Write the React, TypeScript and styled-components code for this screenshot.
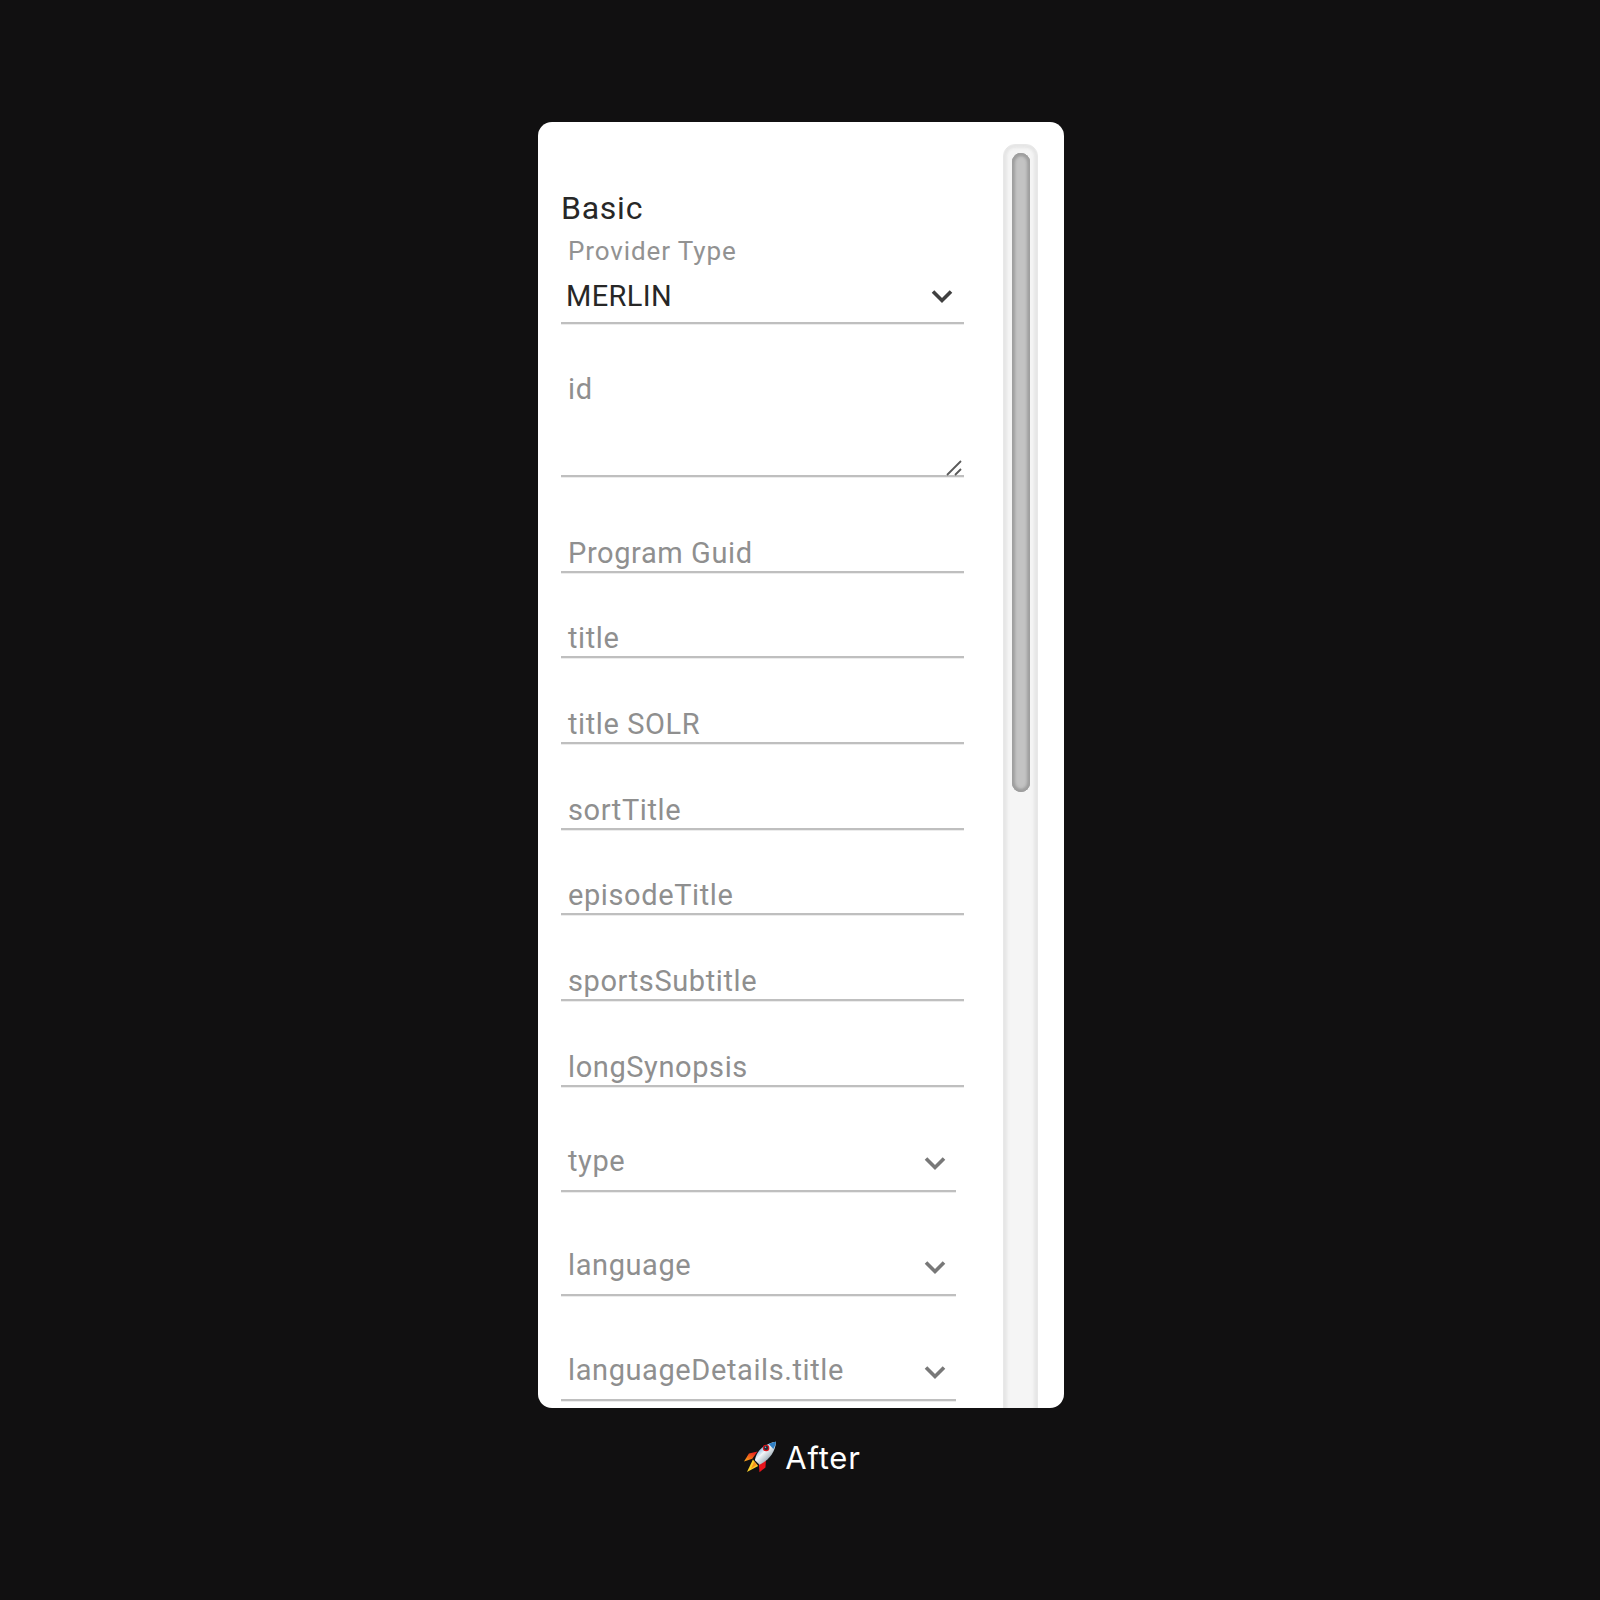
import React from "react";
import styled, { createGlobalStyle } from "styled-components";

const Global = createGlobalStyle`
  html, body { margin: 0; padding: 0; background: #111011; }
  body { font-family: Roboto, "Liberation Sans", sans-serif; }
`;
const Page = styled.div`
  width: 1600px; height: 1600px; background: #111011; display: flex; flex-direction: column; align-items: center; padding: 122px 0 0 2px; box-sizing: border-box;
`;
const Card = styled.div`
  width: 526px; height: 1286px; background: #fff; border-radius: 14px; overflow: hidden; display: flex; box-sizing: border-box; flex: none;
`;
const Form = styled.div`
  width: 403px; margin-left: 23px; flex: none; display: flex; flex-direction: column; padding-top: 68px;
`;
const Heading = styled.div`
  font-size: 32px; line-height: 36px; color: #272727; letter-spacing: 0.75px; margin-bottom: 10px;
`;
const SmallLabel = styled.div`
  font-size: 26px; line-height: 30px; color: #929292; padding-left: 7px; letter-spacing: 0.9px;
`;
const Field = styled.div<{ $h: number; $w?: number; $mt?: number; $align?: string }>`
  height: ${p => p.$h}px; width: ${p => p.$w ?? 403}px; margin-top: ${p => p.$mt ?? 0}px; border-bottom: 2px solid #bfbfbf; box-shadow: 0 1px 0 #ececec; box-sizing: border-box;
  display: flex; align-items: ${p => p.$align ?? "flex-end"}; justify-content: space-between; position: relative; flex: none;
`;
const Value = styled.span`
  font-size: 29px; line-height: 34px; color: #272727; padding-left: 5px; margin-bottom: 9px; letter-spacing: 0.35px;
`;
const Placeholder = styled.span<{ $mb?: number; $mt?: number }>`
  font-size: 29px; line-height: 34px; color: #8f8f8f; padding-left: 7px; margin-bottom: ${p => p.$mb ?? 1}px; margin-top: ${p => p.$mt ?? 0}px; letter-spacing: 0.6px;
`;
const Chevron = styled.svg<{ $dark?: boolean; $right: number; $bottom: number }>`
  width: 24px; height: 16px; margin-right: ${p => p.$right}px; margin-bottom: ${p => p.$bottom}px; fill: none; stroke: ${p => p.$dark ? "#404040" : "#787878"}; stroke-width: 3.6;
`;
const Grip = styled.svg`
  position: absolute; right: 0; bottom: -1px; width: 20px; height: 18px; stroke: #5a5a5a; stroke-width: 1.8; fill: none;
`;
const Track = styled.div`
  margin: 22px 0 0 39px; width: 35px; flex: none; height: 1300px; box-sizing: border-box; padding: 8px 8px 0;
  background: #f5f5f5; border-radius: 12px 12px 0 0; border: 1px solid #e8e8e8; box-shadow: inset 3px 0 3px #e6e6e6, inset -3px 0 3px #e6e6e6, inset 0 3px 3px #e6e6e6;
`;
const Thumb = styled.div`
  width: 18px; height: 639px; border-radius: 9px; background: #c3c3c3; box-shadow: inset 3px 0 3px #9f9f9f, inset -3px 0 3px #9f9f9f, inset 0 3px 3px #9f9f9f, inset 0 -3px 3px #9f9f9f;
`;
const Caption = styled.div`
  display: flex; align-items: center; margin: 28px 0 0 3px; color: #fff; font-family: Inter, Roboto, sans-serif; font-size: 31px; line-height: 44px; letter-spacing: 0.8px; gap: 8px;
`;
const Rocket = styled.svg`
  width: 33px; height: 32px; flex: none; margin-bottom: 2px;
`;

const chevron = <path d="M3 3.5 L12 12.5 L21 3.5" />;
const simple = ["Program Guid", "title", "title SOLR", "sortTitle", "episodeTitle", "sportsSubtitle", "longSynopsis"];
const selects = ["type", "language", "languageDetails.title"];

export default function App() {
  return (
    <Page>
      <Global />
      <Card>
        <Form>
          <Heading>Basic</Heading>
          <SmallLabel>Provider Type</SmallLabel>
          <Field $h={58}>
            <Value>MERLIN</Value>
            <Chevron $dark $right={10} $bottom={18} viewBox="0 0 24 16">{chevron}</Chevron>
          </Field>
          <Field $h={126} $mt={27} $align="flex-start">
            <Placeholder $mt={21}>id</Placeholder>
            <Grip viewBox="0 0 20 18"><path d="M3 17 L17 3 M11 17 L17 11" /></Grip>
          </Field>
          {simple.map((s, i) => (
            <Field key={s} $h={60} $mt={i === 0 ? 35.5 : 25.71}><Placeholder>{s}</Placeholder></Field>
          ))}
          {selects.map((s, i) => (
            <Field key={s} $h={60} $w={395} $mt={i === 0 ? 45 : 44.5}>
              <Placeholder $mb={12}>{s}</Placeholder>
              <Chevron $right={9} $bottom={19} viewBox="0 0 24 16">{chevron}</Chevron>
            </Field>
          ))}
        </Form>
        <Track><Thumb /></Track>
      </Card>
      <Caption>
        <Rocket viewBox="25 18 100 97">
          <defs>
            <linearGradient id="hull" x1="0.15" y1="0.15" x2="0.75" y2="0.85">
              <stop offset="0" stopColor="#3f8fd0" />
              <stop offset="0.45" stopColor="#f2f6f8" />
              <stop offset="0.75" stopColor="#b9c4cc" />
              <stop offset="1" stopColor="#5f7f99" />
            </linearGradient>
            <linearGradient id="fin" x1="0.8" y1="0" x2="0.2" y2="1">
              <stop offset="0" stopColor="#e8141c" />
              <stop offset="1" stopColor="#f7a21a" />
            </linearGradient>
          </defs>
          <path d="M66 50 L40 56 L25 80 L50 72 Z" fill="url(#fin)" />
          <path d="M92 70 L90 98 L72 113 L70 88 Z" fill="#e8141c" />
          <path d="M52 74 L34 112 L68 94 Z" fill="#fbd22c" />
          <path d="M56 80 L46 102 L64 90 Z" fill="#f7941d" />
          <path d="M58 76 C63 46 90 25 122 20 C120 52 100 76 72 90 Z" fill="url(#hull)" />
          <path d="M122 20 C114 21 106 24 100 27 L114 42 C118 35 121 28 122 20 Z" fill="#2f7fc4" />
          <circle cx="92" cy="39" r="10" fill="#d8141c" />
          <circle cx="92" cy="39" r="6.5" fill="#1f2a33" />
          <circle cx="90" cy="37" r="2.4" fill="#7fb4dc" />
        </Rocket>
        <span>After</span>
      </Caption>
    </Page>
  );
}
